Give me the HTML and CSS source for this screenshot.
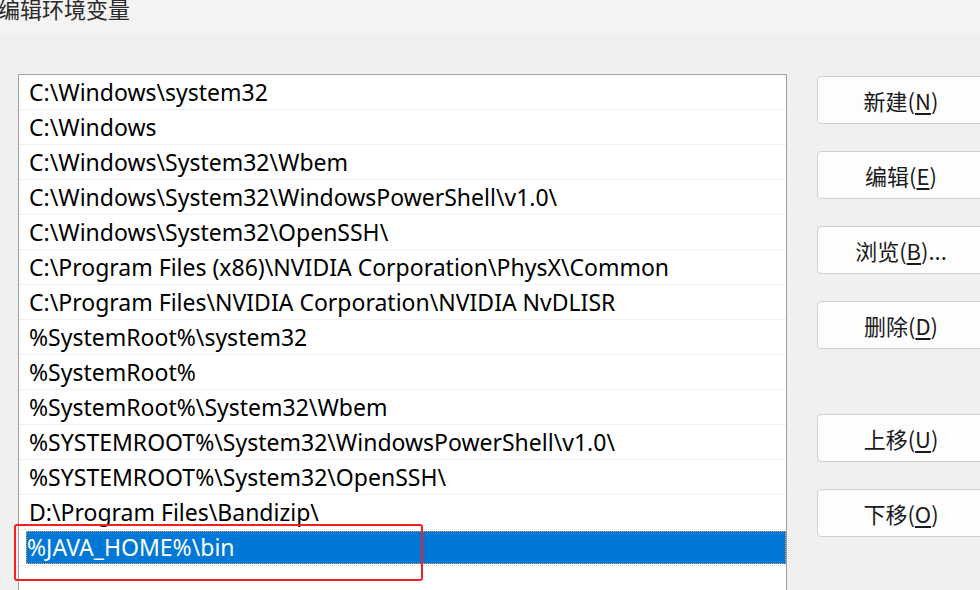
FILE: index.html
```html
<!DOCTYPE html>
<html lang="zh-CN">
<head>
    <meta charset="UTF-8">
    <title>编辑环境变量</title>
    <link rel="stylesheet" href="styles.css">
</head>
<body>
    <div class="title-bar">
        <span class="title">编辑环境变量</span>
    </div>
    <main class="dialog">
        <!-- Lista ścieżek -->
        <div class="path-list">
            <div class="row">C:\Windows\system32</div>
            <div class="row">C:\Windows</div>
            <div class="row">C:\Windows\System32\Wbem</div>
            <div class="row">C:\Windows\System32\WindowsPowerShell\v1.0\</div>
            <div class="row">C:\Windows\System32\OpenSSH\</div>
            <div class="row">C:\Program Files (x86)\NVIDIA Corporation\PhysX\Common</div>
            <div class="row">C:\Program Files\NVIDIA Corporation\NVIDIA NvDLISR</div>
            <div class="row">%SystemRoot%\system32</div>
            <div class="row">%SystemRoot%</div>
            <div class="row">%SystemRoot%\System32\Wbem</div>
            <div class="row">%SYSTEMROOT%\System32\WindowsPowerShell\v1.0\</div>
            <div class="row">%SYSTEMROOT%\System32\OpenSSH\</div>
            <div class="row">D:\Program Files\Bandizip\</div>
            <div class="row row-selected">
                <span class="selected-text">%JAVA_HOME%\bin</span>
                <span class="highlight-box"></span>
            </div>
        </div>

        <!-- Przyciski -->
        <div class="actions">
            <button class="button">新建(<u>N</u>)</button>
            <button class="button">编辑(<u>E</u>)</button>
            <button class="button">浏览(<u>B</u>)...</button>
            <button class="button">删除(<u>D</u>)</button>
            <button class="button button-gap">上移(<u>U</u>)</button>
            <button class="button">下移(<u>O</u>)</button>
        </div>
    </main>
</body>
</html>
```

FILE: styles.css
```css
/* Ogólne ustawienia */
body {
    margin: 0;
    width: 980px;
    height: 590px;
    overflow: hidden;
    background-color: #f0f0f0;
    font-family: "Noto Sans", "Noto Sans CJK SC", sans-serif;
    color: #1a1a1a;
}

.title-bar {
    height: 34px;
    background-color: #f3f3f4;
    overflow: hidden;
}

.title {
    display: block;
    margin: -5px 0 0 -2px;
    font-family: "Noto Sans CJK SC", sans-serif;
    font-size: 22px;
    line-height: 26px;
    color: #2b2b2b;
}

/* Układ główny */
.dialog {
    display: flex;
    align-items: flex-start;
    padding: 40px 0 0 18px;
}

.path-list {
    width: 767px;
    height: 516px;
    border: 1px solid #a0a0a0;
    border-bottom: none;
    background-color: #ffffff;
    flex-shrink: 0;
}

.row {
    position: relative;
    height: 34px;
    line-height: 34px;
    padding-left: 10px;
    border-bottom: 1px solid #f0f0f0;
    font-size: 23px;
    white-space: nowrap;
    color: #000000;
}

.row-selected {
    padding-left: 7px;
}

.selected-text {
    display: block;
    height: 33px;
    line-height: 33px;
    margin-top: 1px;
    padding-left: 1px;
    background-color: #0078d7;
    color: #ffffff;
    outline: 1px dotted #e8a060;
    outline-offset: -1px;
}

/* Czerwona ramka zaznaczenia */
.highlight-box {
    position: absolute;
    left: -5px;
    top: -7px;
    width: 405px;
    height: 53px;
    border: 2px solid #f22020;
    border-radius: 3px;
}

/* Przyciski */
.actions {
    display: flex;
    flex-direction: column;
    gap: 27px;
    margin: 2px 0 0 30px;
}

.button {
    width: 168px;
    height: 48px;
    border: 1px solid #d0d0d0;
    border-radius: 4px;
    background-color: #fdfdfd;
    font-family: "Noto Sans CJK SC", sans-serif;
    font-size: 22px;
    color: #1a1a1a;
    padding: 0;
}

.button u {
    text-underline-offset: 3px;
}

.button-gap {
    margin-top: 38px;
}
```
